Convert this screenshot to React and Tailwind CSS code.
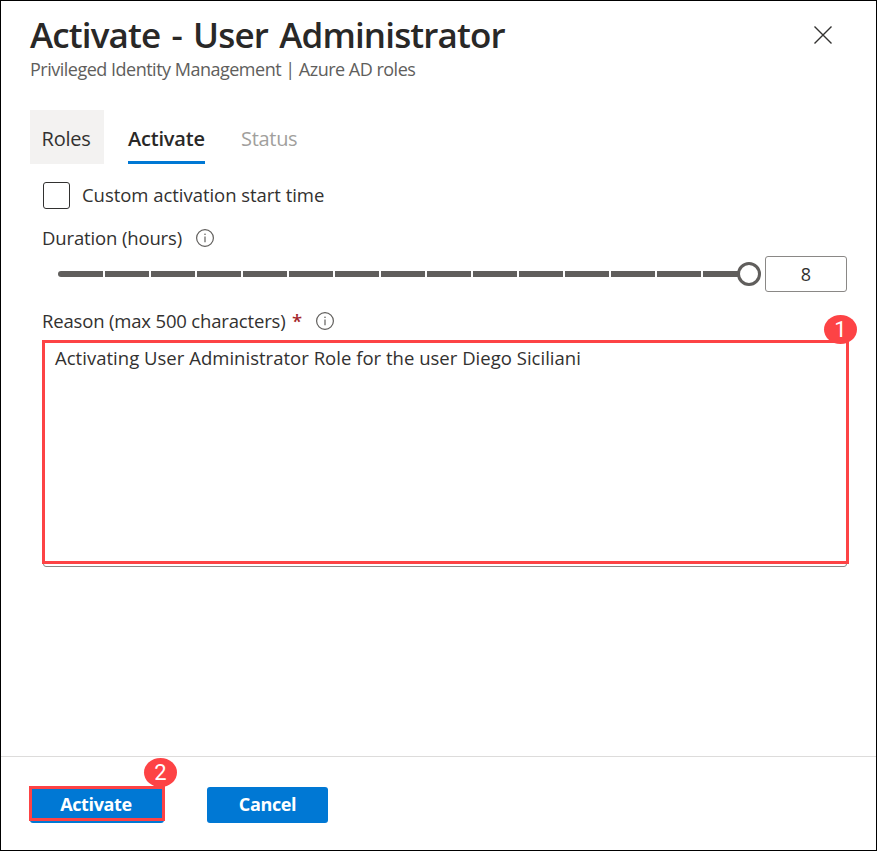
const TICKS = Array.from({ length: 15 }, (_, i) => i);

function InfoIcon() {
  return (
    <svg width="18" height="18" viewBox="0 0 18 18" fill="none" className="shrink-0">
      <circle cx="9" cy="9" r="8.4" stroke="#605e5c" strokeWidth="1.2" />
      <path d="M9 7.5v5.8" stroke="#605e5c" strokeWidth="1.2" />
      <circle cx="9" cy="5.3" r="0.8" fill="#605e5c" />
    </svg>
  );
}

function Badge({ children, className }) {
  return (
    <span
      className={`absolute flex h-[29px] w-[33px] items-center justify-center rounded-[50%] bg-[#fd4345] font-['Roboto',sans-serif] text-[22px] leading-none tracking-normal text-white ${className}`}
    >
      {children}
    </span>
  );
}

export default function App() {
  return (
    <div className="flex h-[851px] w-[877px] flex-col border border-black bg-white font-['Open_Sans','Noto_Sans',sans-serif] whitespace-nowrap text-[#323130]">
      <header className="flex h-[109px] justify-between pl-[29px] pr-[44px]">
        <div className="pt-[10px]">
          <h1 className="h-[47px] text-[35px] leading-[47px] font-semibold tracking-[-0.86px] text-[#292827] [word-spacing:3px]">Activate - User Administrator</h1>
          <p className="h-[22px] text-[18px] leading-[22px] tracking-[-0.5px] text-[#605e5c]">Privileged Identity Management | Azure AD roles</p>
        </div>
        <button className="mt-[25px] h-[18px] w-[18px]">
          <svg width="18" height="18" viewBox="0 0 18 18" fill="none">
            <path d="M0.5 0.5l17 17M17.5 0.5l-17 17" stroke="#323130" strokeWidth="1.35" />
          </svg>
        </button>
      </header>

      <nav className="flex h-[54px] pl-[29px] text-[20px] leading-[58px]">
        <button className="flex h-[54px] w-[74px] bg-[#f3f2f1] pl-[11.5px] tracking-[-0.2px]">Roles</button>
        <button className="ml-[24px] flex h-[54px] w-[77px] border-b-3 border-[#0078d4] font-semibold tracking-[-0.2px] text-[#292827]">Activate</button>
        <button className="ml-[36px] flex h-[54px] text-[#a19f9d] tracking-[-0.3px]">Status</button>
      </nav>

      <main className="flex h-[592px] flex-col pl-[41px] text-[18.5px] leading-[26px]">
        <label className="mt-[18px] flex h-[27px] pl-px">
          <span className="h-[27px] w-[27px] rounded-[3px] border border-[#323130]" />
          <span className="ml-[12px] tracking-[-0.04px]">Custom activation start time</span>
        </label>

        <div className="mt-[16px] flex h-[26px] items-center">
          <span className="w-[154px] tracking-[-0.14px]">Duration (hours)</span>
          <InfoIcon />
        </div>

        <div className="mt-[5px] flex h-[36px] items-center pl-[16px]">
          <div className="flex w-[690px] gap-[2px]">
            {TICKS.map((i) => (
              <span key={i} className="h-[6px] w-[44px] shrink-0 bg-[#605e5c] first:w-[45px] first:rounded-l-[3px]" />
            ))}
          </div>
          <span className="relative -ml-[11.5px] h-[24px] w-[24px] shrink-0 rounded-full border-3 border-[#605e5c] bg-white" />
          <span className="ml-[4.5px] flex h-[36px] w-[82px] items-center justify-center rounded-[3px] border border-[#8a8886] text-[18px]">8</span>
        </div>

        <div className="mt-[16px] flex h-[26px] items-center">
          <span className="w-[250px] tracking-[-0.17px]">Reason (max 500 characters)</span>
          <span className="w-[24px] font-semibold text-[#a4262c]">*</span>
          <InfoIcon />
        </div>

        <div className="relative mt-[6px] h-[227px] w-[807px]">
          <div className="ml-px h-[227px] w-[804px] rounded-[3px] border border-[#8a8886]" />
          <div className="absolute top-0 left-0 h-[224px] w-[807px] border-3 border-[#fd4345] bg-white pt-[2px] pl-[10px] tracking-[0.02px]">
            Activating User Administrator Role for the user Diego Siciliani
          </div>
          <Badge className="-top-[25px] left-[782px]">1</Badge>
        </div>
      </main>

      <footer className="flex h-[94px] border-t border-[#dddcdb] pt-[30px] pl-[29px] text-[18px] font-bold tracking-[-0.35px] text-white">
        <div className="relative h-[36px] w-[134px]">
          <button className="flex h-[36px] w-[134px] justify-center rounded-[3px] bg-[#0078d4] pr-[2px] leading-[34px]">Activate</button>
          <span className="absolute -top-px -left-px h-[35px] w-[136px] border-3 border-[#fd4345]" />
          <Badge className="-top-[29px] left-[114px] font-normal">2</Badge>
        </div>
        <button className="ml-[43px] flex h-[36px] w-[121px] justify-center rounded-[3px] bg-[#0078d4] leading-[34px]">Cancel</button>
      </footer>
    </div>
  );
}
